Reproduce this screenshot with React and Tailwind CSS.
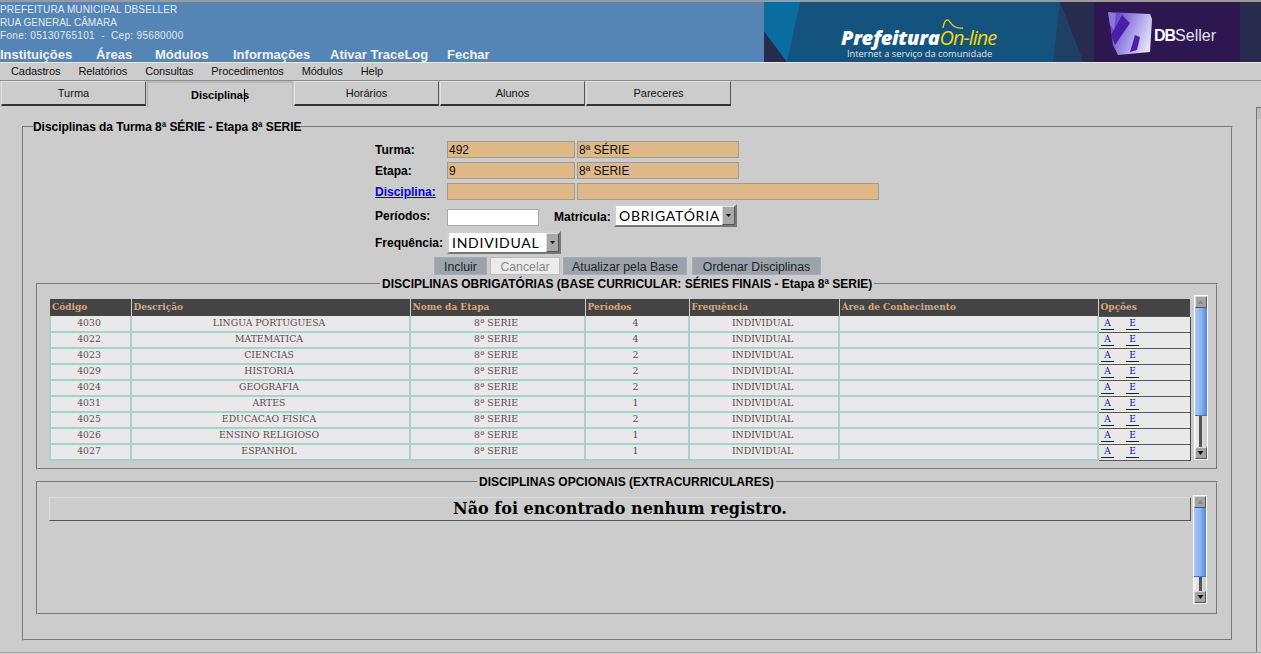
const navItems = [
  ['Instituições', 'w-[96px]'],
  ['Áreas', 'w-[59px]'],
  ['Módulos', 'w-[78px]'],
  ['Informações', 'w-[97px]'],
  ['Ativar TraceLog', 'w-[117px]'],
  ['Fechar', ''],
];
const subItems = ['Cadastros', 'Relatórios', 'Consultas', 'Procedimentos', 'Módulos', 'Help'];
const tabs = ['Turma', 'Disciplinas', 'Horários', 'Alunos', 'Pareceres'];
const columns = [
  ['Código', 'w-[81px]'],
  ['Descrição', 'w-[279px]'],
  ['Nome da Etapa', 'w-[175px]'],
  ['Períodos', 'w-[104px]'],
  ['Frequência', 'w-[150px]'],
  ['Área de Conhecimento', 'w-[259px]'],
  ['Opções', 'w-[92px]'],
];
const rows = [
  ['4030', 'LINGUA PORTUGUESA', '4'],
  ['4022', 'MATEMATICA', '4'],
  ['4023', 'CIENCIAS', '2'],
  ['4029', 'HISTORIA', '2'],
  ['4024', 'GEOGRAFIA', '2'],
  ['4031', 'ARTES', '1'],
  ['4025', 'EDUCACAO FISICA', '2'],
  ['4026', 'ENSINO RELIGIOSO', '1'],
  ['4027', 'ESPANHOL', '1'],
];

function Banner() {
  return (
    <div className="relative w-[497px] h-[60px] shrink-0 overflow-hidden">
      <svg className="block" width="497" height="60" viewBox="0 0 497 60">
        <defs>
          <linearGradient id="logoFill" x1="0" y1="0.2" x2="1" y2="0.6">
            <stop offset="0" stopColor="#5a2fc0" />
            <stop offset="0.5" stopColor="#9d8fe6" />
            <stop offset="1" stopColor="#e4e2f8" />
          </linearGradient>
        </defs>
        <rect width="497" height="60" fill="#272b4d" />
        <polygon points="0,0 296,0 319,60 23,60 0,29" fill="#15537f" />
        <polygon points="0,0 36,0 23,60 0,29" fill="#0b6c9f" />
        <polygon points="296,0 319,60 289,60" fill="#1f4062" />
        <rect x="330" width="146" height="60" fill="#2e1650" />
        <polygon points="344,10 386,12 388,17 386,50 354,53 349,43 346,23" fill="url(#logoFill)" />
        <polygon points="358,13 366,21 351,43 347,33" fill="#4a1fa8" />
        <polygon points="371,33 376,35 373,48 366,50" fill="#4a1fa8" />
        <polygon points="344,10 352,11 350,28 346,23" fill="#8a78d8" />
      </svg>
      <div className="absolute left-[77px] top-[26px] flex items-baseline font-['Open_Sans',sans-serif] text-[20px] leading-[20px] italic">
        <span className="font-extrabold text-white tracking-[-0.3px]">Prefeitura</span>
        <span className="text-[#f3d90a] tracking-[-1px]">On-line</span>
      </div>
      <svg className="absolute left-[176px] top-[15px]" width="26" height="14" viewBox="0 0 26 14">
        <path d="M3 11C4 5 6 2 8 3C11 5 12 12 23 11" fill="none" stroke="#f3d90a" strokeWidth="1.3" />
      </svg>
      <div className="absolute left-[83px] top-[46px] font-['Open_Sans',sans-serif] text-[9.3px] leading-[11px] text-[#dfe7ee]">
        Internet a serviço da comunidade
      </div>
      <div className="absolute left-[390px] top-[25px] font-['Liberation_Sans',sans-serif] text-[16px] leading-[18px] text-[#e4e2ee]">
        <span className="font-bold text-white tracking-[-1px]">DB</span>Seller
      </div>
    </div>
  );
}

function ArrowBox({ up }) {
  return (
    <div className="w-[12px] h-[12px] bg-[#a4a4a4] border border-t-[#d8d8d8] border-l-[#d8d8d8] border-r-[#555] border-b-[#555] flex items-center justify-center">
      <svg width="7" height="6" viewBox="0 0 7 6">
        {up
          ? <polygon points="3.5,1 6.5,5 0.5,5" fill="#888" />
          : <polygon points="0.5,1 6.5,1 3.5,5" fill="#111" />}
      </svg>
    </div>
  );
}

function ScrollBar({ height, thumb }) {
  return (
    <div className={`${height} w-[14px] bg-white p-px flex flex-col shrink-0`}>
      <ArrowBox up />
      <div className={`${thumb} bg-gradient-to-r from-[#a9c8f4] via-[#8db4ee] to-[#4f85de] border-b border-[#2f7ae0]`} />
      <div className="flex-1 bg-gradient-to-r from-[#eee] to-[#ccc] flex justify-center">
        <div className="w-[3px] bg-[#555]" />
      </div>
      <ArrowBox />
    </div>
  );
}

function Field({ className, value }) {
  return (
    <div className={`${className} h-[17px] bg-[#deb887] border border-[#a09a90] pl-[1px] text-[12px] leading-[17px] font-normal text-[#111]`}>
      {value}
    </div>
  );
}

function SelectBox({ className, value }) {
  return (
    <div className={`${className} h-[23px] bg-white border-2 border-[#cfcfcf] border-r-[#777] border-b-[#777] flex items-center justify-between font-['Lato',sans-serif] font-normal text-[14px] tracking-[0.75px] text-black`}>
      <span className="pl-[3px] whitespace-nowrap">{value}</span>
      <div className="w-[13px] h-[19px] bg-[#a8a8a8] border border-t-[#ddd] border-l-[#ddd] border-r-[#555] border-b-[#555] flex items-center justify-center">
        <svg width="7" height="4" viewBox="0 0 7 4"><polygon points="1,0 6,0 3.5,3" fill="#111" /></svg>
      </div>
    </div>
  );
}

function ActionButton({ label, className }) {
  return (
    <div className={`${className} h-[18px] bg-[#9ba3ad] border border-[#a6adb6] text-center text-[12.3px] leading-[18px] text-[#222]`}>
      {label}
    </div>
  );
}

export default function App() {
  return (
    <div className="w-[1261px] h-[654px] overflow-hidden bg-[#cccccc] font-['Liberation_Sans',sans-serif] text-black">
      <div className="h-[63px] border-t-2 border-[#9a9a9a] border-b border-b-[#e6e6e6] bg-[#5585b5] flex justify-between">
        <div className="pt-[1px]">
          <div className="text-[10px] leading-[13px] text-[#e4e8ec] tracking-[0.12px]">PREFEITURA MUNICIPAL DBSELLER</div>
          <div className="text-[10px] leading-[13px] text-[#e4e8ec] tracking-[0.03px]">RUA GENERAL CÂMARA</div>
          <div className="text-[10px] leading-[13px] text-[#e4e8ec] tracking-[0.32px] whitespace-pre">Fone: 05130765101  -  Cep: 95680000</div>
          <div className="flex text-[13px] leading-[15px] mt-[5px] font-bold text-[#eef2f5]">
            {navItems.map(([label, width]) => <span key={label} className={`${width} whitespace-nowrap`}>{label}</span>)}
          </div>
        </div>
        <Banner />
      </div>

      <div className="h-[18px] border-b border-[#8e8e8e] pl-[11px] flex gap-[18px] text-[11px] leading-[17px] tracking-[-0.08px] text-[#111]">
        {subItems.map(item => <span key={item}>{item}</span>)}
      </div>

      <div className="h-[26px] pl-px flex gap-px">
        {tabs.map(tab => {
          const active = tab === 'Disciplinas';
          return (
            <div
              key={tab}
              className={active
                ? 'relative w-[146px] h-[26px] border-t-2 border-l border-r border-[#b8b8b8] border-l-[#aaa] text-center text-[11px] leading-[24px] font-bold'
                : 'w-[145px] h-[25px] border border-[#e0e0e0] border-r-[#555] border-b-[#333] border-b-2 text-center text-[11px] leading-[22px] text-[#111]'}
            >
              {tab}
              {active && <span className="absolute left-[96px] top-[6px] w-px h-[13px] bg-black" />}
            </div>
          );
        })}
      </div>

      <div className="flex h-[546px] border-b border-[#a8a8a8]">
        <div className="w-[1256px] shrink-0 pl-[22px] pt-[13px]">
          <fieldset className="w-[1211px] h-[521px] border-2 [border-style:groove] border-[#cccccc] pl-[12px] pr-[13px] pb-0">
            <legend className="-ml-[3px] text-[12px] leading-[14px] font-bold tracking-[-0.05px]">Disciplinas da Turma 8ª SÉRIE - Etapa 8ª SERIE</legend>

            <div className="pl-[339px] pt-[7px] h-[123px] text-[12px] font-bold">
              <div className="flex items-center h-[17px] gap-[2px]">
                <span className="w-[70px]">Turma:</span>
                <Field className="w-[128px]" value="492" />
                <Field className="w-[162px]" value="8ª SÉRIE" />
              </div>
              <div className="flex items-center h-[17px] gap-[2px] mt-[4px]">
                <span className="w-[70px]">Etapa:</span>
                <Field className="w-[128px]" value="9" />
                <Field className="w-[162px]" value="8ª SERIE" />
              </div>
              <div className="flex items-center h-[17px] gap-[2px] mt-[4px]">
                <span className="w-[70px] text-[#0000ee] underline">Disciplina:</span>
                <Field className="w-[128px]" value="" />
                <Field className="w-[302px]" value="" />
              </div>
              <div className="flex items-center h-[23px] mt-[4px]">
                <span className="w-[72px]">Períodos:</span>
                <div className="w-[92px] h-[17px] bg-white border border-[#a8a8a8] mt-[3px]" />
                <span className="ml-[15px] w-[60px] mt-[2px]">Matrícula:</span>
                <SelectBox className="w-[123px]" value="OBRIGATÓRIA" />
              </div>
              <div className="flex items-center h-[23px] mt-[4px]">
                <span className="w-[72px]">Frequência:</span>
                <SelectBox className="w-[114px]" value="INDIVIDUAL" />
              </div>
            </div>

            <div className="pl-[398px] flex gap-[3px] font-normal h-[18px]">
              <ActionButton label="Incluir" className="w-[53px]" />
              <div className="w-[70px] h-[18px] bg-[#ececec] border border-[#bbb] text-center text-[12.3px] leading-[18px] text-[#888]">Cancelar</div>
              <ActionButton label="Atualizar pela Base" className="w-[124px]" />
              <ActionButton label="Ordenar Disciplinas" className="w-[129px] ml-[2px]" />
            </div>

            <fieldset className="mt-[2px] h-[193px] border-2 [border-style:groove] border-[#cccccc] pl-[11px] pr-0">
              <legend className="ml-[331px] px-[2px] text-[12px] leading-[14px] font-bold tracking-[-0.01px]">DISCIPLINAS OBRIGATÓRIAS (BASE CURRICULAR: SÉRIES FINAIS - Etapa 8ª SERIE)</legend>
              <div className="flex items-start gap-[3px] pt-[8px]">
                <table className="table-fixed border-collapse w-[1140px] font-['DejaVu_Serif',serif] text-[9px]">
                  <thead>
                    <tr>
                      {columns.map(([label, width]) => (
                        <th key={label} className={`${width} h-[17px] bg-[#444444] border-r border-[#cfcfcf] pl-[2px] pt-[1px] text-left font-bold text-[#d9a876] whitespace-nowrap`}>{label}</th>
                      ))}
                    </tr>
                  </thead>
                  <tbody>
                    {rows.map(([code, name, periods]) => (
                      <tr key={code} className="h-[16px] text-center text-[#5c4a4a]">
                        {[code, name, '8ª SERIE', periods, 'INDIVIDUAL', ''].map((cell, i) => (
                          <td key={i} className="bg-[#e9e9e9] border-b-2 border-r-2 border-[#a9cfcf] p-0 pr-[3px] pb-[2px] text-[9.3px] leading-[12px] whitespace-nowrap first:border-l-2">{cell}</td>
                        ))}
                        <td className="bg-[#e9e9e9] border-t border-t-[#555] border-l border-l-[#444] border-r border-r-[#444] [tr:last-child_&]:border-b [tr:last-child_&]:border-b-[#555] p-0 text-left text-[#0000ee]">
                          <span className="inline-block ml-[2px] w-[13px] h-[13px] leading-[12px] text-center border-b border-[#0000ee]">A</span>
                          <span className="inline-block ml-[12px] w-[13px] h-[13px] leading-[12px] text-center border-b border-[#0000ee]">E</span>
                        </td>
                      </tr>
                    ))}
                  </tbody>
                </table>
                <div className="-mt-[4px]">
                  <ScrollBar height="h-[165px]" thumb="h-[108px]" />
                </div>
              </div>
            </fieldset>

            <fieldset className="mt-[5px] h-[140px] border-2 [border-style:groove] border-[#cccccc] pl-[11px] pr-0">
              <legend className="ml-[428px] px-[2px] text-[12px] leading-[14px] font-bold">DISCIPLINAS OPCIONAIS (EXTRACURRICULARES)</legend>
              <div className="flex items-start gap-[2px] pt-[8px]">
                <div className="w-[1142px] h-[24px] border border-t-[#dcdcdc] border-l-[#dcdcdc] border-r-[#555] border-b-[#555] text-center font-['DejaVu_Serif',serif] text-[16px] leading-[22px] font-bold">
                  Não foi encontrado nenhum registro.
                </div>
                <div className="-mt-[2px]">
                  <ScrollBar height="h-[109px]" thumb="h-[69px]" />
                </div>
              </div>
            </fieldset>
          </fieldset>
        </div>
        <div className="flex-1 border-l border-[#777]">
          <div className="w-[4px] h-[12px] bg-[#bbb] border-t border-[#777]" />
        </div>
      </div>
    </div>
  );
}
